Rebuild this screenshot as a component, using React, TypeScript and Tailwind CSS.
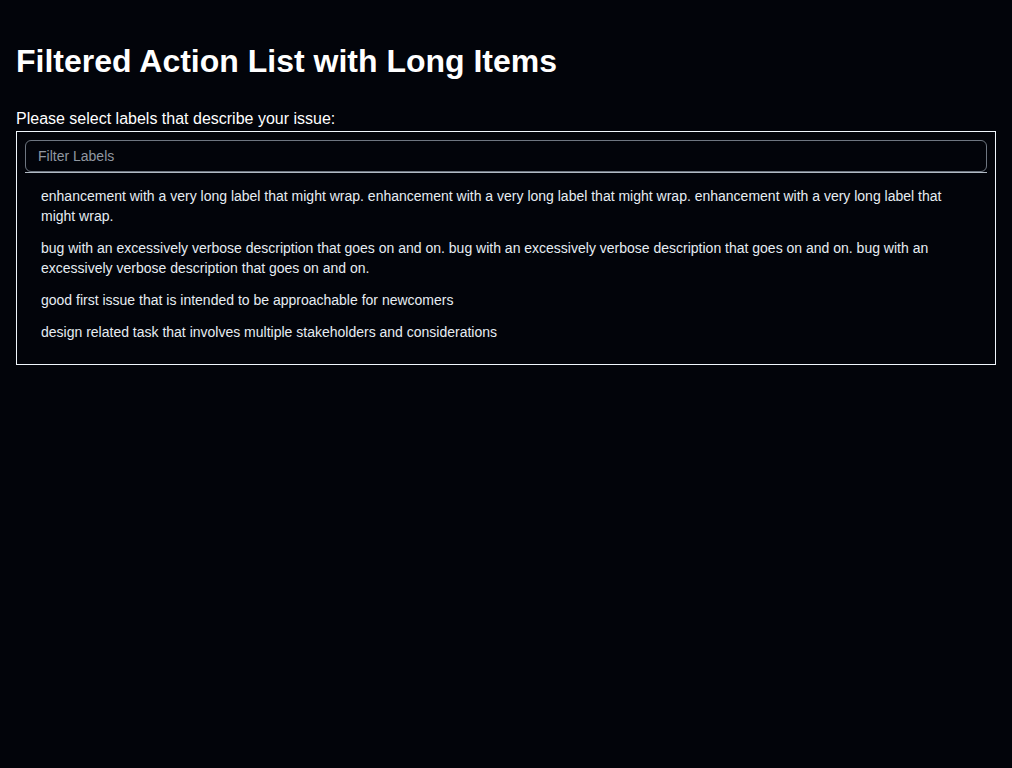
const items = [
  'enhancement with a very long label that might wrap. enhancement with a very long label that might wrap. enhancement with a very long label that might wrap.',
  'bug with an excessively verbose description that goes on and on. bug with an excessively verbose description that goes on and on. bug with an excessively verbose description that goes on and on.',
  'good first issue that is intended to be approachable for newcomers',
  'design related task that involves multiple stakeholders and considerations',
]

export default function App() {
  return (
    <div className="min-h-screen bg-[#02040a] px-4 pt-4 font-['Liberation_Sans',Arial,sans-serif] text-[#f0f6fc]">
      <h1 className="mt-[27px] text-[32px] font-bold leading-[37px] text-white">Filtered Action List with Long Items</h1>
      <p className="mt-[30px] text-base leading-[18px] text-white">Please select labels that describe your issue:</p>
      <div className="mt-[3px] border border-[#f0f6fc] p-2">
        <div className="border-b border-[#b1bac4]">
          <input
            className="block h-8 w-full rounded-md border border-[#6e7681] bg-transparent px-3 text-sm text-[#e6edf3] outline-none placeholder:text-[#9198a1]"
            placeholder="Filter Labels"
          />
        </div>
        <ul className="px-2 pt-[7px] pb-2">
          {items.map((item) => (
            <li key={item} className="px-2 py-1.5 text-sm leading-5 text-[#e6edf3]">
              {item}
            </li>
          ))}
        </ul>
      </div>
    </div>
  )
}
